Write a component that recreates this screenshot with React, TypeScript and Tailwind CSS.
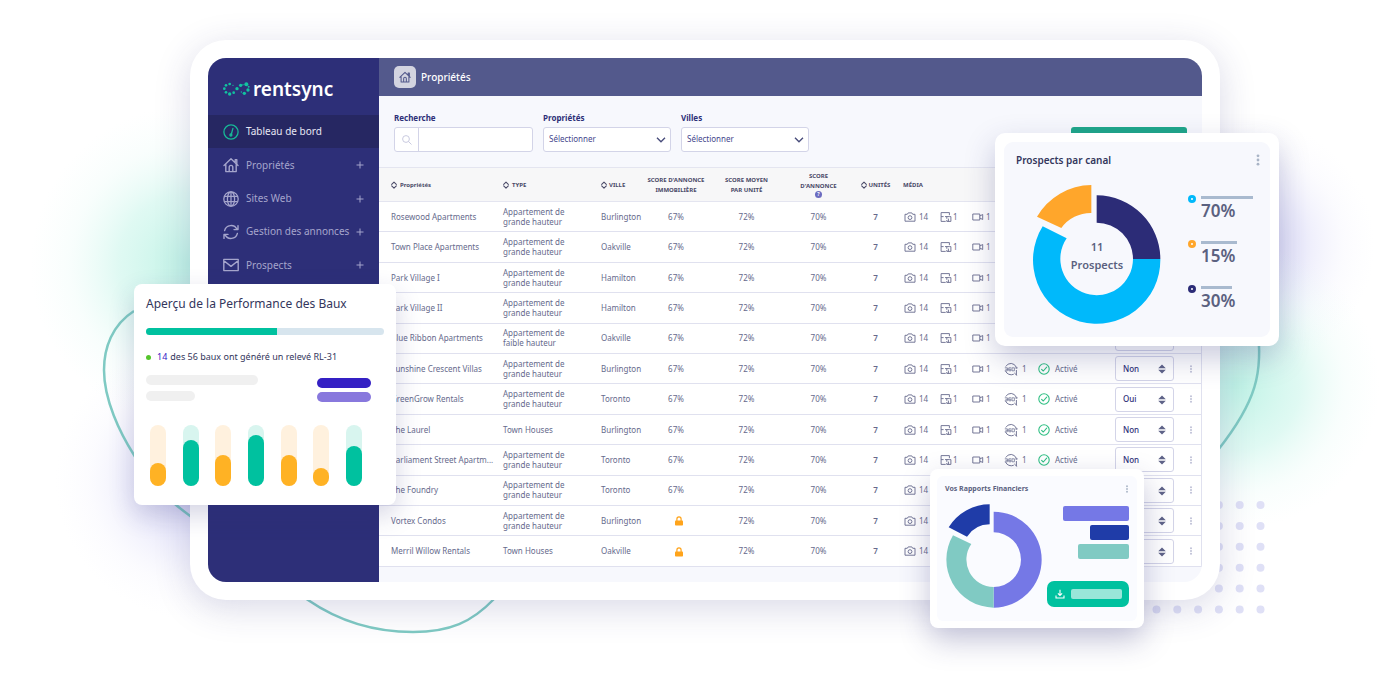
import type { ReactNode } from "react";

const navItems = [
  { label: "Propriétés", icon: <HomeIcon className="size-4" /> },
  { label: "Sites Web", icon: <GlobeIcon /> },
  { label: "Gestion des annonces", icon: <SyncIcon /> },
  { label: "Prospects", icon: <MailIcon /> },
];

const HIGH = "Appartement de grande hauteur";
const LOW = "Appartement de faible hauteur";

const rows = [
  { name: "Rosewood Apartments", type: HIGH, city: "Burlington", locked: false, value: "Non" },
  { name: "Town Place Apartments", type: HIGH, city: "Oakville", locked: false, value: "Non" },
  { name: "Park Village I", type: HIGH, city: "Hamilton", locked: false, value: "Non" },
  { name: "Park Village II", type: HIGH, city: "Hamilton", locked: false, value: "Non" },
  { name: "Blue Ribbon Apartments", type: LOW, city: "Oakville", locked: false, value: "Non" },
  { name: "Sunshine Crescent Villas", type: HIGH, city: "Burlington", locked: false, value: "Non" },
  { name: "GreenGrow Rentals", type: HIGH, city: "Toronto", locked: false, value: "Oui" },
  { name: "The Laurel", type: "Town Houses", city: "Burlington", locked: false, value: "Non" },
  { name: "Parliament Street Apartm...", type: HIGH, city: "Toronto", locked: false, value: "Non" },
  { name: "The Foundry", type: HIGH, city: "Toronto", locked: false, value: "Non" },
  { name: "Vortex Condos", type: HIGH, city: "Burlington", locked: true, value: "Non" },
  { name: "Merril Willow Rentals", type: "Town Houses", city: "Oakville", locked: true, value: "Non" },
];

const leaseBars = [
  { fill: 23, green: false },
  { fill: 46, green: true },
  { fill: 31, green: false },
  { fill: 51, green: true },
  { fill: 31, green: false },
  { fill: 18, green: false },
  { fill: 40, green: true },
];

const channels = [
  { value: "70%", ring: "border-[#00b9fb]", bar: "w-[52px]" },
  { value: "15%", ring: "border-[#ffa62b]", bar: "w-9" },
  { value: "30%", ring: "border-[#2c2c77]", bar: "w-[31px]" },
];

function HomeIcon({ className }: { className: string }) {
  return (
    <svg viewBox="0 0 16 16" className={`shrink-0 ${className}`} fill="none" stroke="currentColor" strokeWidth="1.4" strokeLinecap="round" strokeLinejoin="round">
      <path d="M1 8.4 8 1.8l7 6.6M12.2 5.6V2.6h1.6v4.2M2.8 7.6v7h3.4v-4.4c0-1 .8-1.8 1.8-1.8s1.8.8 1.8 1.8v4.4h3.4v-7M6.2 14.6h3.6" />
    </svg>
  );
}

function GaugeIcon() {
  return (
    <svg viewBox="0 0 16 16" className="size-4 shrink-0" fill="none" stroke="#17b897" strokeWidth="1.3" strokeLinecap="round">
      <circle cx="8" cy="8" r="7.1" />
      <path d="M9.9 4.4 8.4 10" />
      <circle cx="7.9" cy="11" r="1" fill="#17b897" />
    </svg>
  );
}

function GlobeIcon() {
  return (
    <svg viewBox="0 0 16 16" className="size-4 shrink-0" fill="none" stroke="currentColor" strokeWidth="1.3">
      <circle cx="8" cy="8" r="7.2" />
      <ellipse cx="8" cy="8" rx="3.6" ry="7.2" />
      <path d="M8 .8v14.4M1.4 5.3h13.2M1.4 10.7h13.2" />
    </svg>
  );
}

function SyncIcon() {
  return (
    <svg viewBox="0 0 16 16" className="size-4 shrink-0" fill="none" stroke="currentColor" strokeWidth="1.4" strokeLinecap="round" strokeLinejoin="round">
      <path d="M1.6 6.6A6.6 6.6 0 0 1 14 5.4M15 1.6v4h-4M14.4 9.4A6.6 6.6 0 0 1 2 10.6M1 14.4v-4h4" />
    </svg>
  );
}

function MailIcon() {
  return (
    <svg viewBox="0 0 16 16" className="size-4 shrink-0" fill="none" stroke="currentColor" strokeWidth="1.4" strokeLinejoin="round">
      <path d="M.8 2.4h14.4v11.2H.8zM1.6 4.2 8 9.4l6.4-5.2" />
    </svg>
  );
}

function SortIcon() {
  return (
    <svg viewBox="0 0 6 8" className="h-2 w-1.5 shrink-0" fill="none" stroke="#4a4a68" strokeWidth="1.1" strokeLinecap="round" strokeLinejoin="round">
      <path d="M.7 3.3 3 1.1l2.3 2.2M.7 4.9 3 7.1l2.3-2.2" />
    </svg>
  );
}

function CameraIcon() {
  return (
    <svg viewBox="0 0 12 10" className="h-2.5 w-3" fill="none" stroke="currentColor" strokeWidth=".9" strokeLinejoin="round">
      <path d="M1 2.3h2.3l.9-1.4h3.6l.9 1.4H11v6.9H1z" />
      <circle cx="6" cy="5.6" r="1.9" />
    </svg>
  );
}

function PlanIcon() {
  return (
    <svg viewBox="0 0 12 10" className="h-2.5 w-3" fill="none" stroke="currentColor" strokeWidth=".9">
      <path d="M9.4 3.2V.6H1.1v8.8h4.6M1.1 4.6h2.5M5 4.6h4.4M6.8 4.6v2.2M9.4 4.6h1.5v4.8H6.8V8M8.4 6.6v2.8" />
    </svg>
  );
}

function VideoIcon() {
  return (
    <svg viewBox="0 0 12 8" className="h-2 w-3" fill="none" stroke="currentColor" strokeWidth=".9" strokeLinejoin="round">
      <path d="M.8 1h7v6h-7zM7.8 3l2.9-1.5v5L7.8 5" />
    </svg>
  );
}

function TourIcon() {
  return (
    <svg viewBox="0 0 14 14" className="size-3.5" fill="none" stroke="currentColor" strokeWidth=".9" strokeLinecap="round">
      <path d="M1.9 4.2A5.8 5.8 0 0 1 12.2 5M1.6 9.2A5.8 5.8 0 0 0 9.4 12.4M12.4 8.4v4.4M10.6 11.2l1.8 1.8" />
      <path d="M1.2 5.8h2.2v3H1.2M1.8 7.3h1.6M7 5.8H4.8v3H7V7.3H4.8M8.4 5.8h2v3h-2z" strokeWidth=".7" />
      <circle cx="12.3" cy="5.9" r=".7" strokeWidth=".6" />
    </svg>
  );
}

function CheckIcon() {
  return (
    <svg viewBox="0 0 12 12" className="size-3" fill="none" stroke="#2fbf83" strokeWidth="1.1" strokeLinecap="round" strokeLinejoin="round">
      <circle cx="6" cy="6" r="5.2" />
      <path d="m3.6 6.3 1.7 1.7 3.4-3.8" />
    </svg>
  );
}

function LockIcon() {
  return (
    <svg viewBox="0 0 10 10" className="ml-1.5 inline size-2.5" fill="none">
      <path d="M2.9 5V3a2.1 2.1 0 0 1 4.2 0v2" stroke="#ffa41b" strokeWidth="1.2" />
      <rect x="1" y="4.4" width="8" height="5.2" rx=".8" fill="#ffa41b" />
    </svg>
  );
}

function Dots({ className }: { className: string }) {
  return (
    <svg viewBox="0 0 4 12" className={className} fill="currentColor">
      <circle cx="2" cy="1.8" r="1.4" />
      <circle cx="2" cy="6" r="1.4" />
      <circle cx="2" cy="10.2" r="1.4" />
    </svg>
  );
}

function LogoMark() {
  const dots = [
    [149, 163, 4], [138, 167, 4], [133, 177, 4], [138, 188, 4], [149, 193, 5], [161, 189, 4], [159, 167, 2],
    [171, 177, 5], [182, 167, 5], [199, 164, 6], [189, 165, 2], [206, 171, 3], [204, 181, 5], [193, 191, 5], [184, 187, 2],
  ];
  return (
    <svg viewBox="129 157 81 42" className="h-3.5 w-[27px]" fill="#12c3a0">
      {dots.map(([x, y, r]) => (
        <circle key={`${x}-${y}`} cx={x} cy={y} r={r} />
      ))}
    </svg>
  );
}

function Backdrop() {
  const dots = [];
  for (let r = 0; r < 6; r++) {
    for (let c = 0; c < 6; c++) {
      dots.push(<circle key={`${r}-${c}`} cx={1156.5 + c * 20.8} cy={505 + r * 20.9} r="4" />);
    }
  }
  return (
    <svg viewBox="0 0 1400 693" className="pointer-events-none absolute -top-10 -left-[190px] h-[693px] w-[1400px] max-w-none" fill="none">
      <defs>
        <radialGradient id="mint">
          <stop offset="0" stopColor="#7fe6cc" stopOpacity=".5" />
          <stop offset=".45" stopColor="#a5efdc" stopOpacity=".35" />
          <stop offset=".75" stopColor="#c8f6ea" stopOpacity=".12" />
          <stop offset="1" stopColor="#d8faf1" stopOpacity="0" />
        </radialGradient>
        <radialGradient id="lilac">
          <stop offset="0" stopColor="#9492e6" stopOpacity=".42" />
          <stop offset=".45" stopColor="#b4b3f0" stopOpacity=".24" />
          <stop offset=".75" stopColor="#d2d1f8" stopOpacity=".08" />
          <stop offset="1" stopColor="#e4e4fb" stopOpacity="0" />
        </radialGradient>
      </defs>
      <circle cx="190" cy="265" r="160" fill="url(#mint)" />
      <circle cx="195" cy="480" r="140" fill="url(#lilac)" />
      <circle cx="1250" cy="245" r="125" fill="url(#lilac)" />
      <circle cx="1235" cy="385" r="145" fill="url(#mint)" />
      <g fill="#dfe0f6">{dots}</g>
      <g stroke="#7fcac3" strokeWidth="2.5">
        <path d="M134 311C112 325 104 348 104 370C104 400 120 433 134 455C148 478 160 490 175 504C190 518 275 576 308 600C340 622 375 632 413 632C450 632 472 622 494 599" />
        <path d="M1257 325C1264 372 1256 402 1218 450" />
      </g>
    </svg>
  );
}

function Sidebar() {
  return (
    <aside className="flex w-[171px] shrink-0 flex-col bg-[#2d2f78]">
      <div className="flex h-[57px] items-center gap-[3px] pt-1 pl-[15px] text-white">
        <LogoMark />
        <span className="text-[19px] leading-5 font-semibold">rentsync</span>
      </div>
      <nav className="flex h-[167px] flex-col text-[10px] text-[#a5a5cc]">
        <a href="#tableau" className="flex flex-1 items-center gap-[7px] bg-[#262762] px-[15px] text-[#e8e8f4]">
          <GaugeIcon />
          Tableau de bord
        </a>
        {navItems.map((item) => (
          <a key={item.label} href="#" className="flex flex-1 items-center gap-[7px] px-[15px]">
            {item.icon}
            <span className="flex-1 whitespace-nowrap">{item.label}</span>
            <svg viewBox="0 0 8 8" className="size-2 shrink-0" stroke="currentColor" strokeWidth="1">
              <path d="M4 .5v7M.5 4h7" />
            </svg>
          </a>
        ))}
      </nav>
    </aside>
  );
}

function Filter({ id, label }: { id: string; label: string }) {
  return (
    <div className="w-32">
      <label htmlFor={id} className="block h-3 leading-3 font-bold">{label}</label>
      <div className="relative mt-[3px]">
        <select id={id} className="h-[25px] w-full appearance-none rounded-[3px] border border-[#d3d4e8] bg-white pb-px pl-[5px] text-[#44468c]">
          <option>Sélectionner</option>
        </select>
        <svg viewBox="0 0 10 6" className="pointer-events-none absolute top-2.5 right-[5px] h-1.5 w-2.5" fill="none" stroke="#4b4f7d" strokeWidth="1.4">
          <path d="m1 .8 4 4 4-4" />
        </svg>
      </div>
    </div>
  );
}

function Filters() {
  return (
    <form className="flex h-[71px] gap-2.5 px-[15px] pt-4 text-[8px] text-[#2d2f78]">
      <div className="w-[139px]">
        <label htmlFor="recherche" className="block h-3 leading-3 font-bold">Recherche</label>
        <div className="mt-[3px] flex h-[25px] rounded-[3px] border border-[#d3d4e8] bg-white">
          <span className="flex w-6 items-center justify-center border-r border-[#d3d4e8]">
            <svg viewBox="0 0 10 10" className="size-2.5" fill="none" stroke="#c3c4dc" strokeWidth=".9">
              <circle cx="4" cy="4" r="3.4" />
              <path d="m6.5 6.5 3 3" />
            </svg>
          </span>
          <input id="recherche" type="text" className="min-w-0 flex-1 px-2 outline-none" />
        </div>
      </div>
      <Filter id="proprietes" label="Propriétés" />
      <Filter id="villes" label="Villes" />
      <button type="button" aria-label="Ajouter" className="mt-[15px] ml-auto h-[25px] w-[116px] rounded-[3px] bg-[#1fa78a]" />
    </form>
  );
}

function Media({ icon, count, className }: { icon: ReactNode; count: number; className: string }) {
  return (
    <span className={`flex items-center ${className}`}>
      {icon}
      {count}
    </span>
  );
}

function PropertyTable() {
  return (
    <table className="h-[400px] w-full table-fixed border-collapse border-r border-b border-[#e0e1ef] bg-white text-[8px] leading-[10px] text-[#666a8c]">
      <colgroup>
        <col className="w-[124px]" />
        <col className="w-[98px]" />
        <col className="w-10" />
        <col className="w-[70px]" />
        <col className="w-[71px]" />
        <col className="w-[73px]" />
        <col className="w-[41px]" />
        <col className="w-[142px]" />
        <col className="w-[70px]" />
        <col className="w-[73px]" />
        <col />
      </colgroup>
      <thead className="bg-[#f7f7f8] text-[6px] whitespace-nowrap text-[#4a4a68]">
        <tr className="h-[34px] border-t border-b border-[#e4e5f0]">
          <th className="p-0 pl-3 text-left">
            <span className="flex items-center gap-[3px]"><SortIcon />Propriétés</span>
          </th>
          <th>
            <span className="flex items-center gap-[3px]"><SortIcon />TYPE</span>
          </th>
          <th>
            <span className="flex items-center gap-0.5"><SortIcon />VILLE</span>
          </th>
          <th>SCORE D'ANNONCE<br />IMMOBILIÈRE</th>
          <th>SCORE MOYEN<br />PAR UNITÉ</th>
          <th>
            SCORE<br />D'ANNONCE
            <span className="mx-auto block size-[7px] rounded-full bg-[#6c6cc0] text-[5px] leading-[7px] text-white">?</span>
          </th>
          <th>
            <span className="flex items-center justify-center gap-0.5"><SortIcon />UNITÉS</span>
          </th>
          <th className="pl-[7px] text-left">MÉDIA</th>
          <th />
          <th />
          <th />
        </tr>
      </thead>
      <tbody>
        {rows.map((row) => (
          <tr key={row.name} className="border-b border-[#e0e1ef]">
            <td className="pl-3 whitespace-nowrap">{row.name}</td>
            <td><p className="w-[70px]">{row.type}</p></td>
            <td>{row.city}</td>
            <td className="text-center">{row.locked ? <LockIcon /> : "67%"}</td>
            <td className="text-center">72%</td>
            <td className="text-center">70%</td>
            <td className="text-center font-semibold">7</td>
            <td className="pl-2">
              <div className="flex">
                <Media icon={<CameraIcon />} count={14} className="w-9 gap-[3px]" />
                <Media icon={<PlanIcon />} count={1} className="w-8 gap-px" />
                <Media icon={<VideoIcon />} count={1} className="w-8 gap-0.5" />
                <Media icon={<TourIcon />} count={1} className="gap-1" />
              </div>
            </td>
            <td>
              <span className="flex items-center gap-[5px]"><CheckIcon />Activé</span>
            </td>
            <td>
              <div className="relative mx-auto w-[59px]">
                <select aria-label={row.name} defaultValue={row.value} className="block h-[25px] w-full appearance-none rounded-[3px] border border-[#d3d4e8] bg-white pl-[7px] font-medium text-[#2d2f78]">
                  <option>Non</option>
                  <option>Oui</option>
                </select>
                <svg viewBox="0 0 8 10" className="pointer-events-none absolute top-2 right-2 h-2.5 w-2" fill="#5f6388">
                  <path d="M.2 4.2 4 .4l3.8 3.8zM.2 5.8 4 9.6l3.8-3.8z" />
                </svg>
              </div>
            </td>
            <td className="text-[#b9bbd3]">
              <Dots className="mx-auto h-2 w-1" />
            </td>
          </tr>
        ))}
      </tbody>
    </table>
  );
}

function LeaseCard() {
  return (
    <section className="absolute top-[244px] -left-14 w-[262px] rounded-lg bg-white px-3 pt-3 pb-[19px] text-[#33365c] shadow-[0_10px_26px_rgba(45,47,120,0.2)]">
      <h2 className="h-4 text-xs leading-4 whitespace-nowrap">Aperçu de la Performance des Baux</h2>
      <div className="mt-4 h-[7px] overflow-hidden rounded-full bg-[#d7e5ee]">
        <div className="h-full w-[55%] bg-[#00c19f]" />
      </div>
      <p className="mt-[14px] flex h-4 items-center text-[9px] leading-4 whitespace-nowrap">
        <span className="mr-1.5 size-[5px] rounded-full bg-[#55c52b]" />
        <span className="mr-[3px] text-[#3420c4]">14</span> des 56 baux ont généré un relevé RL-31
      </p>
      <div className="mt-[10px] flex justify-between pr-[13px]">
        <div className="space-y-1.5">
          <div className="h-2.5 w-28 rounded-full bg-[#f0f0f0]" />
          <div className="h-2.5 w-[49px] rounded-full bg-[#f0f0f0]" />
        </div>
        <div className="mt-[3px] space-y-1">
          <div className="h-2.5 w-[54px] rounded-full bg-[#3420c4]" />
          <div className="h-2.5 w-[54px] rounded-full bg-[#8878dd]" />
        </div>
      </div>
      <div className="mt-[23px] flex justify-between pr-[22px] pl-1">
        {leaseBars.map((bar, i) => (
          <div key={i} className={`flex h-[61px] w-4 items-end rounded-full ${bar.green ? "bg-[#d8f5ef]" : "bg-[#fff1de]"}`}>
            <div className={`w-full rounded-full ${bar.green ? "bg-[#00c19f]" : "bg-[#ffb224]"}`} style={{ height: bar.fill }} />
          </div>
        ))}
      </div>
    </section>
  );
}

function ChannelCard() {
  return (
    <section className="absolute top-[93px] -right-[59px] w-[284px] rounded-[10px] bg-white p-[9px] text-[#5b6180] shadow-[0_12px_30px_rgba(45,47,120,0.25)]">
      <div className="h-[195px] rounded-[9px] bg-[#f7f8fd] pt-2 pr-2.5 pl-3">
        <div className="flex h-5 items-center justify-between">
          <h2 className="text-[10px] font-semibold text-[#33365c]">Prospects par canal</h2>
          <Dots className="h-3 w-1 text-[#a9b4c6]" />
        </div>
        <div className="flex pl-4">
          <div className="relative mt-3.5">
            <svg viewBox="156 192 390 420" className="h-[140px] w-[130px]">
              <path d="M350 226A191 191 0 0 1 541 417H459A109 109 0 0 0 350 308z" fill="#2c2c77" />
              <path d="M541 417A191 191 0 1 1 188 319L260 355A109 109 0 1 0 459 417z" fill="#00b9fb" />
              <path d="M171 290A191 191 0 0 1 334 195V279A109 109 0 0 0 244 324z" fill="#ffa62b" />
            </svg>
            <p className="absolute inset-x-0 top-[54px] text-center text-[11px] leading-[18px] font-semibold">
              11<br />Prospects
            </p>
          </div>
          <ul className="mt-6 ml-[26px]">
            {channels.map((c) => (
              <li key={c.value} className="flex h-[45px] gap-[5px]">
                <span className={`mt-px size-2 rounded-full border-[3px] bg-white ${c.ring}`} />
                <div className="text-[17px] leading-6 font-semibold">
                  <div className={`mt-0.5 h-[3px] bg-[#a9bacf] ${c.bar}`} />
                  {c.value}
                </div>
              </li>
            ))}
          </ul>
        </div>
      </div>
    </section>
  );
}

function ReportCard() {
  return (
    <section className="absolute top-[429px] right-[76px] w-[214px] rounded-lg bg-white p-[7px] shadow-[0_12px_30px_rgba(45,47,120,0.28)]">
      <div className="h-[145px] rounded-md bg-[#fafbff] pt-1.5 pr-2 pl-2">
        <div className="flex h-3.5 items-center justify-between">
          <h2 className="text-[7px] font-bold text-[#5b6180]">Vos Rapports Financiers</h2>
          <Dots className="h-2 w-1 text-[#a9b4c6]" />
        </div>
        <div className="flex justify-between">
          <svg viewBox="101 144 294 318" className="mt-[7px] h-[106px] w-[98px]">
            <path d="M247 170A144 144 0 0 1 247 458V396A82 82 0 0 0 247 232z" fill="#7578e6" />
            <path d="M247 458A144 144 0 0 1 125 241L180 267A82 82 0 0 0 247 396z" fill="#80cac3" />
            <path d="M112 217A144 144 0 0 1 235 148V208A82 82 0 0 0 167 245z" fill="#1f3ca8" />
          </svg>
          <div className="mt-2.5 flex flex-col items-end gap-1">
            <div className="h-[15px] w-[66px] rounded-xs bg-[#7578e6]" />
            <div className="h-[15px] w-[39px] rounded-xs bg-[#1f3ca8]" />
            <div className="h-[15px] w-[51px] rounded-xs bg-[#80cac3]" />
            <button type="button" aria-label="Télécharger" className="mt-[18px] flex h-[26px] w-[82px] items-center gap-1.5 rounded-[7px] bg-[#00c19f] pl-2">
              <svg viewBox="0 0 10 10" className="size-2.5" fill="none" stroke="#fff" strokeWidth="1.1">
                <path d="M5 .8v5.4M2.9 4.3 5 6.4l2.1-2.1M1 6.6V9h8V6.6" />
              </svg>
              <span className="h-2.5 w-[51px] rounded-xs bg-[#99e6d9]" />
            </button>
          </div>
        </div>
      </div>
    </section>
  );
}

export default function App() {
  return (
    <main className="min-h-screen overflow-hidden bg-white pt-10 pb-16 pl-2.5 font-['Noto_Sans',sans-serif]">
      <div className="relative mx-auto w-full max-w-[1030px]">
        <Backdrop />
        <div className="relative rounded-[36px] bg-white p-[18px] shadow-[0_8px_36px_rgba(45,47,120,0.18)]">
          <div className="flex min-h-[524px] overflow-hidden rounded-[18px] bg-[#f7f8fd]">
            <Sidebar />
            <div className="min-w-0 flex-1">
              <header className="flex h-[38px] items-center gap-[5px] bg-[#53598c] px-[15px]">
                <span className="flex size-[22px] items-center justify-center rounded-[5px] bg-[#d3d4e0] text-[#53598c]">
                  <HomeIcon className="size-3" />
                </span>
                <h1 className="text-[10px] font-medium text-white">Propriétés</h1>
              </header>
              <Filters />
              <PropertyTable />
            </div>
          </div>
        </div>
        <LeaseCard />
        <ChannelCard />
        <ReportCard />
      </div>
    </main>
  );
}
